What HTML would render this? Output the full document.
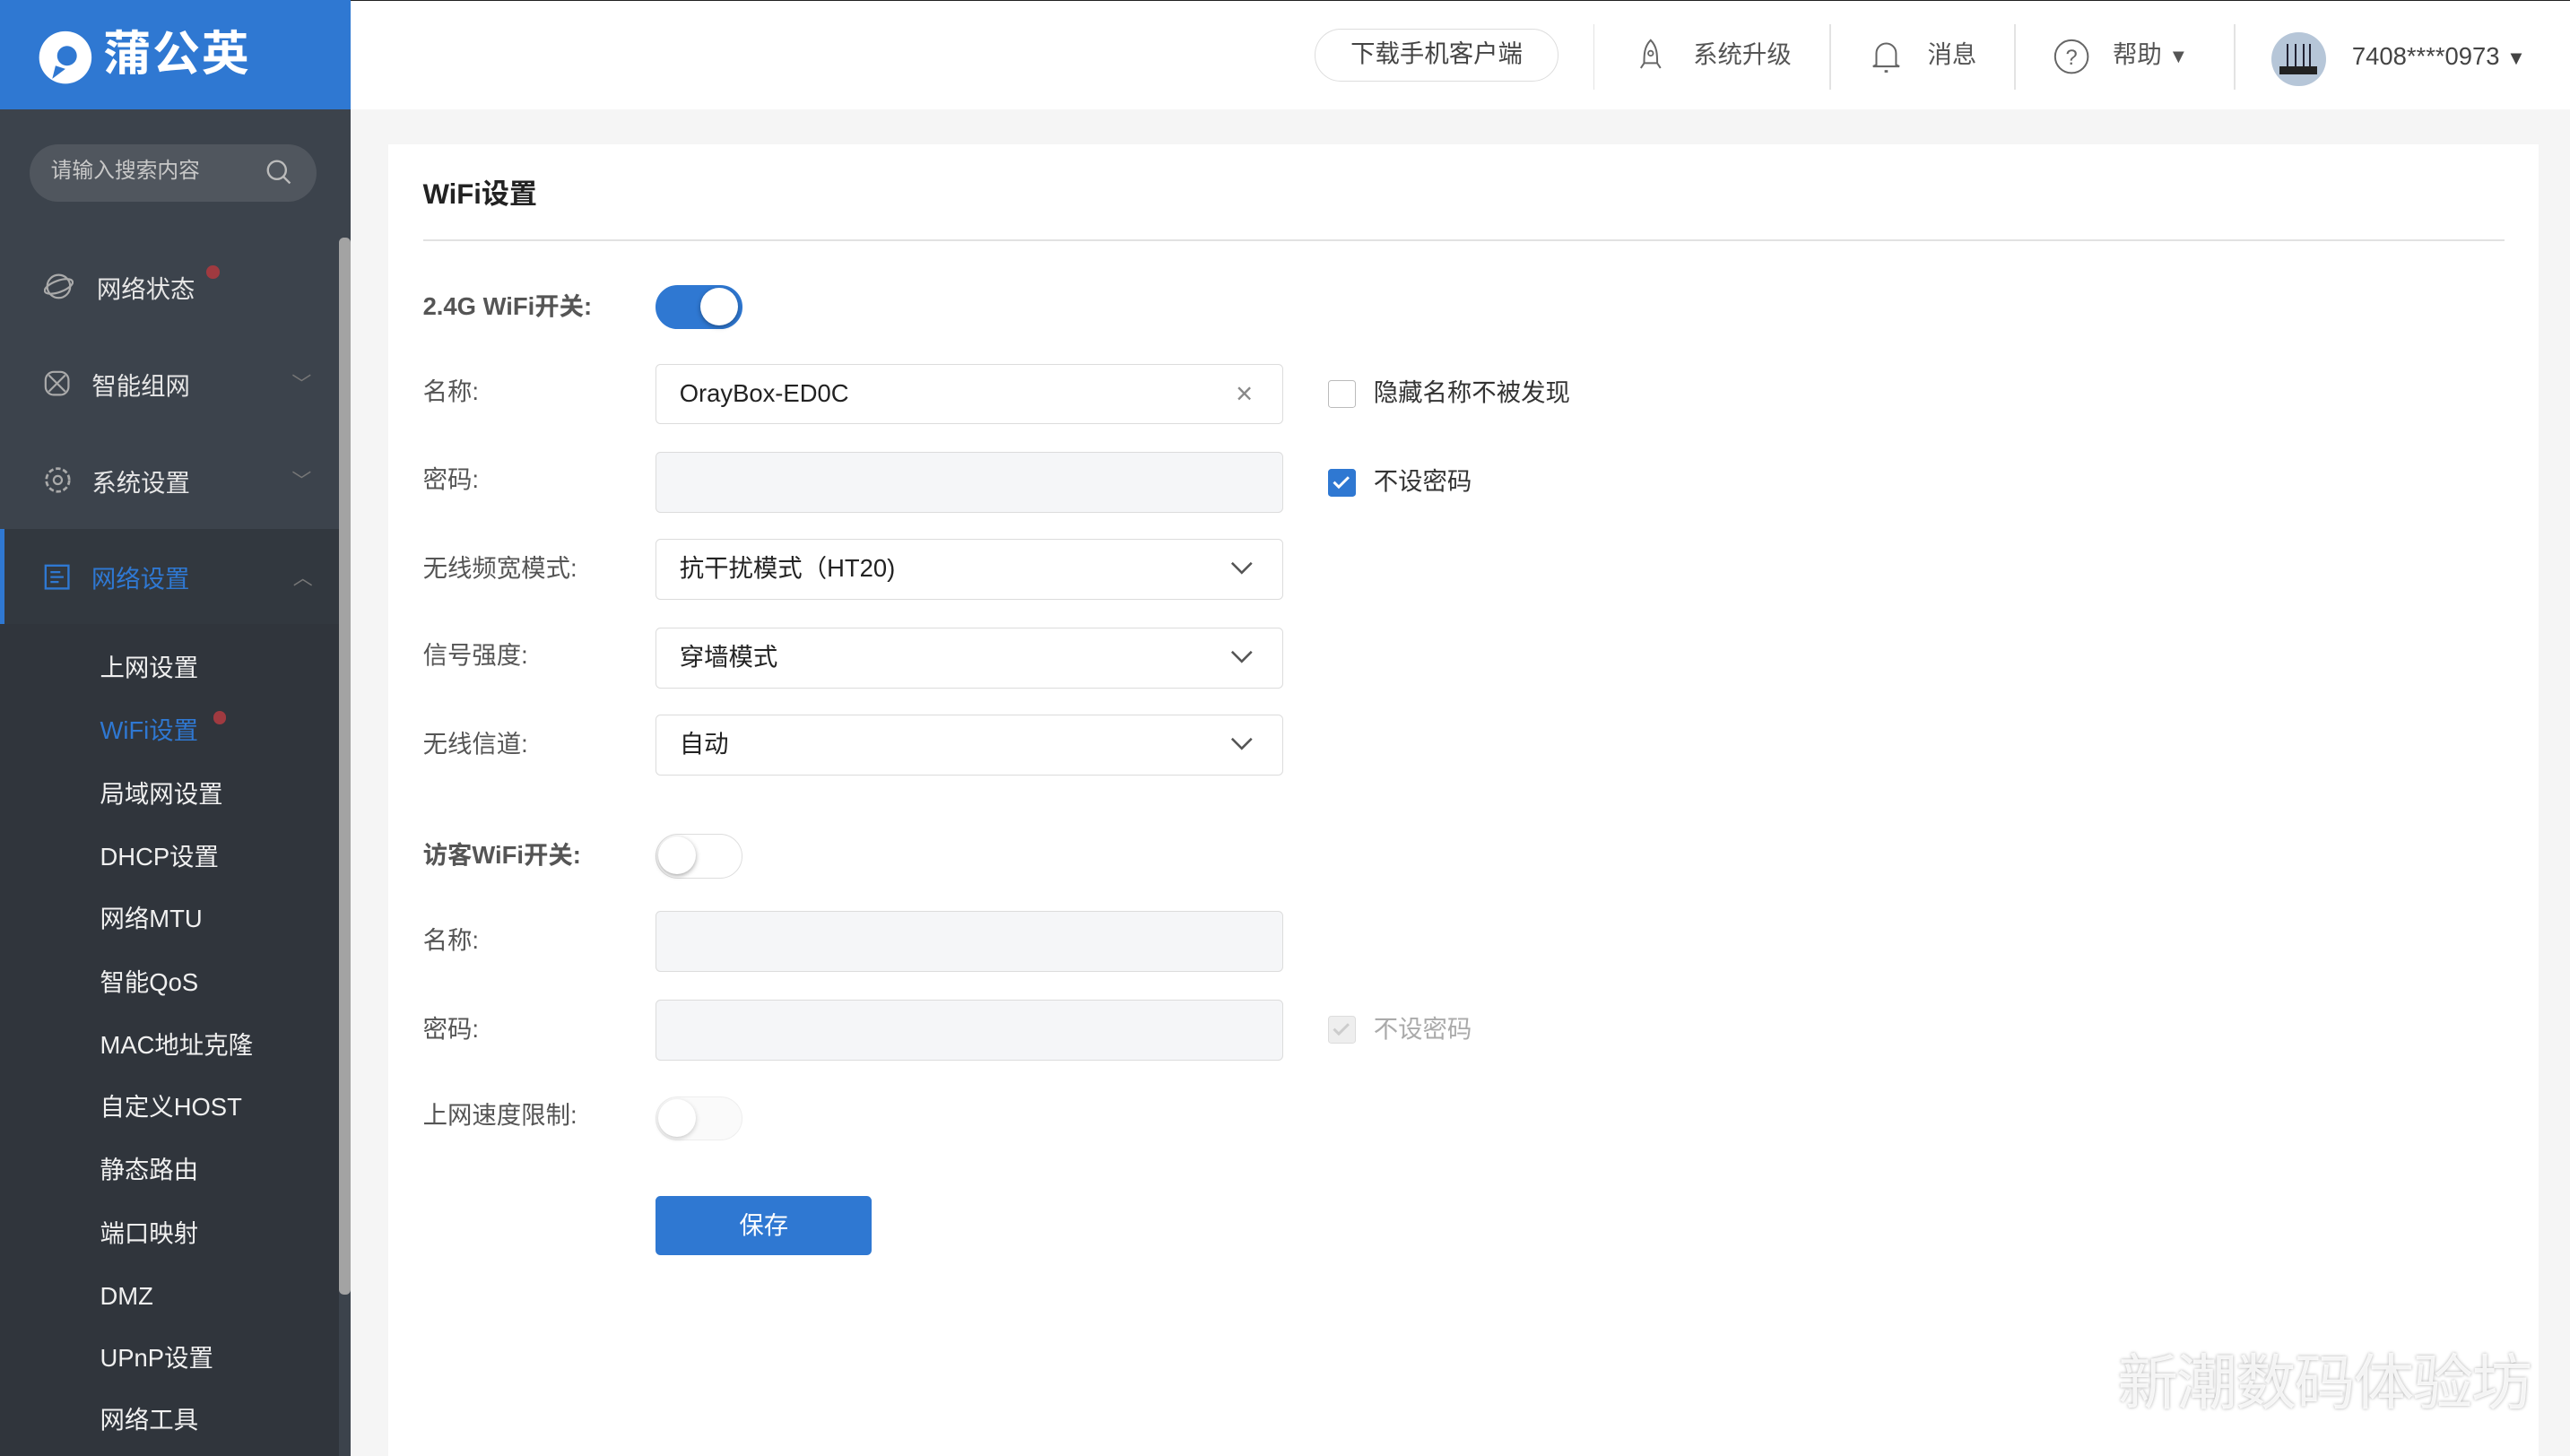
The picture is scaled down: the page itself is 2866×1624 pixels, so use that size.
<!DOCTYPE html>
<html><head><meta charset="utf-8"><style>
*{box-sizing:border-box;margin:0;padding:0}
html,body{width:2866px;height:1624px;overflow:hidden;background:#f5f5f5}
#w{width:1568px;height:889px;zoom:1.827806;position:relative;font-family:"Liberation Sans","Noto Sans CJK SC",sans-serif;color:#333;font-size:15px}
.abs{position:absolute}
#side{left:0;top:0;width:214px;height:889px;background:#3c434c}
#logo{left:0;top:0;width:214px;height:67px;background:#2f78d2;color:#fff}
#top{left:214px;top:0;width:1354px;height:67px;background:#fff;border-top:1px solid #222}
.mi{position:absolute;left:0;width:207px;height:58px;color:#e6e6e6;font-size:15px;display:flex;align-items:center}
.sub{position:absolute;left:61px;color:#f0f0f0;font-size:15px;line-height:20px;height:20px}
.lab{position:absolute;left:258px;color:#555;font-size:15px;line-height:20px;height:20px}
.inp{position:absolute;left:400px;width:383px;height:37px;border:1px solid #dcdcdc;border-radius:3px;background:#fff;font-size:15px;color:#222;padding-left:14px;line-height:35px}
.dis{background:#f5f6f8}
.tg{position:absolute;left:400px;width:53px;height:27px;border-radius:14px;border:1px solid #ddd;background:#fff}
.tg i{position:absolute;left:1px;top:1px;width:23px;height:23px;border-radius:50%;background:#fff;box-shadow:0 1px 3px rgba(0,0,0,.35)}
.cb{position:absolute;left:810px;width:17px;height:17px;border:1px solid #bbb;border-radius:2px;background:#fff}
.cbl{position:absolute;left:838px;font-size:15px;color:#333;line-height:20px}
.sep{position:absolute;top:14px;width:1px;height:40px;background:#e3e3e3}
.tt{position:absolute;top:23px;font-size:15px;color:#555;line-height:20px}
</style></head><body><div id="w">
<div id="side" class="abs">
 <div id="logo" class="abs">
  <svg class="abs" style="left:22px;top:18px" width="36" height="34" viewBox="0 0 36 34"><circle cx="18" cy="17" r="16" fill="#fff"/><circle cx="19" cy="16" r="6" fill="#2f78d2"/><path d="M10 30 L12 22 L18 24Z" fill="#2f78d2"/></svg>
  <div class="abs" style="left:63px;top:13px;font-size:29px;font-weight:bold;letter-spacing:1px;line-height:40px">蒲公英</div>
 </div>
 <div class="abs" style="left:18px;top:88px;width:175px;height:35px;border-radius:18px;background:#50565e;color:#c8c8c8;font-size:13px;line-height:33px;padding-left:13px">请输入搜索内容
  <svg class="abs" style="left:144px;top:9px" width="17" height="17" viewBox="0 0 17 17"><circle cx="7" cy="7" r="5.5" fill="none" stroke="#bbb" stroke-width="1.3"/><path d="M11 11l4 4" stroke="#bbb" stroke-width="1.3"/></svg></div>
 <div class="abs" style="left:207px;top:145px;width:7px;height:645px;background:#a3a3a3;border-radius:3px"></div>
 <div class="mi" style="top:146px"><svg style="margin-left:27px" width="18" height="18" viewBox="0 0 18 18"><circle cx="9" cy="9" r="7" fill="none" stroke="#aaa" stroke-width="1.2"/><ellipse cx="9" cy="9" rx="9" ry="3.5" fill="none" stroke="#aaa" stroke-width="1.2" transform="rotate(-20 9 9)"/></svg><span style="margin-left:14px">网络状态</span></div>
 <div class="abs" style="left:126px;top:162px;width:8px;height:8px;border-radius:50%;background:#a03a40"></div>
 <div class="mi" style="top:205px"><svg style="margin-left:27px" width="16" height="16" viewBox="0 0 16 16"><rect x="1" y="1" width="14" height="14" rx="5" fill="none" stroke="#aaa" stroke-width="1.2"/><path d="M3 3l10 10M13 3L3 13" stroke="#aaa" stroke-width="1.2"/></svg><span style="margin-left:13px">智能组网</span><span style="position:absolute;left:178px;color:#777;font-size:12px">﹀</span></div>
 <div class="mi" style="top:264px"><svg style="margin-left:26px" width="18" height="18" viewBox="0 0 18 18"><circle cx="9" cy="9" r="7" fill="none" stroke="#aaa" stroke-width="1.5" stroke-dasharray="3 1.5"/><circle cx="9" cy="9" r="2.5" fill="none" stroke="#aaa" stroke-width="1.2"/></svg><span style="margin-left:12px">系统设置</span><span style="position:absolute;left:178px;color:#777;font-size:12px">﹀</span></div>
 <div class="mi" style="top:323px;background:#32383f;border-left:3px solid #2f78d2;color:#2f78d2"><svg style="margin-left:24px" width="16" height="16" viewBox="0 0 16 16"><rect x="1" y="1" width="14" height="14" fill="none" stroke="#2f78d2" stroke-width="1.3"/><path d="M4 5h6M4 8h8M4 11h5" stroke="#2f78d2" stroke-width="1.2"/></svg><span style="margin-left:13px">网络设置</span><span style="position:absolute;left:176px;color:#777;font-size:12px">︿</span></div>
 <div class="abs" style="left:0;top:381px;width:207px;height:508px;background:#30353c"></div>
 <div class="sub" style="top:398px">上网设置</div>
 <div class="sub" style="top:436px;color:#2f78d2">WiFi设置</div>
 <div class="abs" style="left:130px;top:434px;width:8px;height:8px;border-radius:50%;background:#a03a40"></div>
 <div class="sub" style="top:475px">局域网设置</div>
 <div class="sub" style="top:513px">DHCP设置</div>
 <div class="sub" style="top:551px">网络MTU</div>
 <div class="sub" style="top:590px">智能QoS</div>
 <div class="sub" style="top:628px">MAC地址克隆</div>
 <div class="sub" style="top:666px">自定义HOST</div>
 <div class="sub" style="top:704px">静态路由</div>
 <div class="sub" style="top:743px">端口映射</div>
 <div class="sub" style="top:781px">DMZ</div>
 <div class="sub" style="top:819px">UPnP设置</div>
 <div class="sub" style="top:857px">网络工具</div>
</div>
<div id="top" class="abs">
 <div class="abs" style="left:588px;top:17px;width:149px;height:32px;border:1px solid #ddd;border-radius:16px;text-align:center;line-height:30px;font-size:15px;color:#444">下载手机客户端</div>
 <div class="sep" style="left:758px"></div>
 <svg class="abs" style="left:786px;top:23px" width="14" height="22" viewBox="0 0 14 22"><path d="M7 1C3 5 3 10 3 15h8c0-5 0-10-4-14zM3 15l-2 3M11 15l2 3" fill="none" stroke="#666" stroke-width="1.1"/><circle cx="7" cy="9" r="1.5" fill="none" stroke="#666"/></svg>
 <div class="tt" style="left:819px">系统升级</div>
 <div class="sep" style="left:902px"></div>
 <svg class="abs" style="left:928px;top:23px" width="18" height="22" viewBox="0 0 18 22"><path d="M3 16V9a6 6 0 0 1 12 0v7l2 1H1z" fill="none" stroke="#666" stroke-width="1.1"/><path d="M8 20h2" stroke="#666" stroke-width="1.5"/></svg>
 <div class="tt" style="left:962px">消息</div>
 <div class="sep" style="left:1015px"></div>
 <svg class="abs" style="left:1039px;top:23px" width="22" height="22" viewBox="0 0 22 22"><circle cx="11" cy="11" r="10" fill="none" stroke="#666" stroke-width="1.1"/><text x="11" y="16" font-size="13" text-anchor="middle" fill="#666" font-family="Liberation Sans">?</text></svg>
 <div class="tt" style="left:1075px">帮助 <span style="font-size:12px">▼</span></div>
 <div class="sep" style="left:1149px"></div>
 <div class="abs" style="left:1172px;top:19px;width:33px;height:33px;border-radius:50%;background:#b6c6d8;overflow:hidden"><div class="abs" style="left:5px;top:21px;width:23px;height:5px;background:#222"></div><div class="abs" style="left:9px;top:7px;width:1px;height:14px;background:#223"></div><div class="abs" style="left:14px;top:7px;width:1px;height:14px;background:#223"></div><div class="abs" style="left:19px;top:7px;width:1px;height:14px;background:#223"></div><div class="abs" style="left:23px;top:7px;width:1px;height:14px;background:#223"></div></div>
 <div class="tt" style="left:1221px;top:24px;color:#444">7408****0973 <span style="font-size:12px">▼</span></div>
</div>
<div class="abs" style="left:237px;top:88px;width:1312px;height:801px;background:#fff">
 <div class="abs" style="left:21px;top:20px;font-size:17px;font-weight:bold;color:#222;line-height:22px">WiFi设置</div>
 <div class="abs" style="left:21px;top:58px;width:1270px;height:1px;background:#e2e2e2"></div>
</div>
<div class="lab" style="top:177px;font-weight:bold;color:#555">2.4G WiFi开关:</div>
<div class="tg" style="top:174px;background:#2f78d2;border-color:#2f78d2"><i style="left:27px"></i></div>
<div class="lab" style="top:229px">名称:</div>
<div class="inp" style="top:222px">OrayBox-ED0C<span style="position:absolute;right:18px;top:0;color:#888;font-size:18px">×</span></div>
<div class="cb" style="top:232px"></div><div class="cbl" style="top:230px">隐藏名称不被发现</div>
<div class="lab" style="top:283px">密码:</div>
<div class="inp dis" style="top:276px"></div>
<div class="cb" style="top:286px;background:#2f78d2;border-color:#2f78d2"><svg width="15" height="15" viewBox="0 0 15 15"><path d="M3 7.5l3 3 6-6" stroke="#fff" stroke-width="1.6" fill="none"/></svg></div><div class="cbl" style="top:284px">不设密码</div>
<div class="lab" style="top:337px">无线频宽模式:</div>
<div class="inp" style="top:329px">抗干扰模式（HT20)<svg style="position:absolute;right:18px;top:13px" width="14" height="9" viewBox="0 0 14 9"><path d="M1 1l6 6 6-6" stroke="#555" stroke-width="1.4" fill="none"/></svg></div>
<div class="lab" style="top:390px">信号强度:</div>
<div class="inp" style="top:383px">穿墙模式<svg style="position:absolute;right:18px;top:13px" width="14" height="9" viewBox="0 0 14 9"><path d="M1 1l6 6 6-6" stroke="#555" stroke-width="1.4" fill="none"/></svg></div>
<div class="lab" style="top:444px">无线信道:</div>
<div class="inp" style="top:436px">自动<svg style="position:absolute;right:18px;top:13px" width="14" height="9" viewBox="0 0 14 9"><path d="M1 1l6 6 6-6" stroke="#555" stroke-width="1.4" fill="none"/></svg></div>
<div class="lab" style="top:512px;font-weight:bold;color:#555">访客WiFi开关:</div>
<div class="tg" style="top:509px"><i></i></div>
<div class="lab" style="top:564px">名称:</div>
<div class="inp dis" style="top:556px"></div>
<div class="lab" style="top:618px">密码:</div>
<div class="inp dis" style="top:610px"></div>
<div class="cb" style="top:620px;background:#eee;border-color:#ddd"><svg width="15" height="15" viewBox="0 0 15 15"><path d="M3 7.5l3 3 6-6" stroke="#ccc" stroke-width="1.6" fill="none"/></svg></div><div class="cbl" style="top:618px;color:#aaa">不设密码</div>
<div class="lab" style="top:671px">上网速度限制:</div>
<div class="tg" style="top:669px;background:#fafafa;border-color:#eee"><i style="box-shadow:0 1px 3px rgba(0,0,0,.2)"></i></div>
<div class="abs" style="left:400px;top:730px;width:132px;height:36px;background:#2f78d2;border-radius:3px;color:#fff;text-align:center;line-height:36px;font-size:15px">保存</div>
<div class="abs" style="left:1292px;top:822px;font-size:37px;line-height:46px;color:rgba(255,255,255,.85);text-shadow:0 0 2px #aaa;letter-spacing:-1px">新潮数码体验坊</div>
</div></body></html>
